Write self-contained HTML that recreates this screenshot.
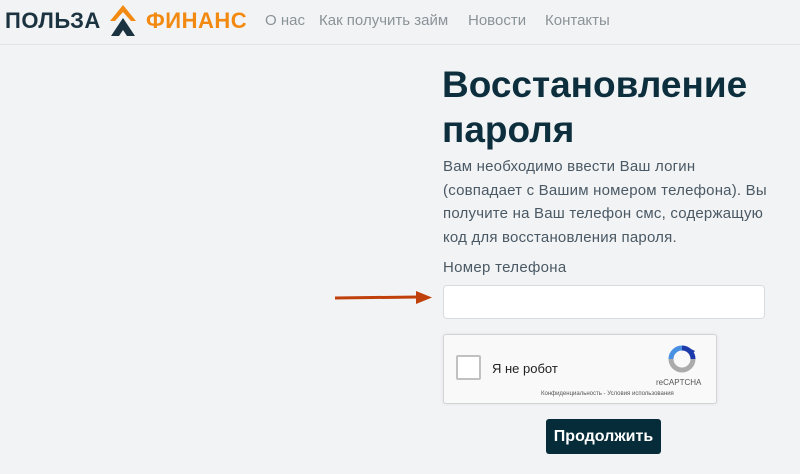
<!DOCTYPE html>
<html><head><meta charset="utf-8"><style>
*{margin:0;padding:0;box-sizing:border-box}
body{width:800px;height:474px;background:#f2f3f5;font-family:"Liberation Sans","Noto Sans CJK SC",sans-serif;position:relative;overflow:hidden}
.hdr{position:absolute;left:0;top:0;width:800px;height:45px;border-bottom:1px solid #e2e4e7}
.logo1{position:absolute;left:5px;top:8px;font-size:22px;font-weight:bold;color:#1b3340;letter-spacing:0.5px}
.logo2{position:absolute;left:146px;top:8px;font-size:22px;font-weight:bold;color:#f28a12;letter-spacing:0.5px}
.nav{position:absolute;top:12px;font-size:15px;color:#8a9398}
h1{position:absolute;left:442px;top:62px;font-size:37px;line-height:45px;color:#0d2f3d;font-weight:bold}
.p{position:absolute;left:443px;top:155px;font-size:15px;line-height:23.7px;color:#4a5964;letter-spacing:0.2px;white-space:nowrap}
.lbl{position:absolute;left:443px;top:259px;font-size:15px;color:#4a5964;letter-spacing:0.3px}
.inp{position:absolute;left:443px;top:285px;width:322px;height:34px;background:#fff;border:1px solid #d8dce0;border-radius:4px}
.cap{position:absolute;left:443px;top:334px;width:274px;height:70px;background:#f9f9f9;border:1px solid #d3d3d3;border-radius:3px;box-shadow:0 0 3px rgba(0,0,0,.08)}
.cb{position:absolute;left:12px;top:20px;width:25px;height:25px;background:#fff;border:2px solid #c1c1c1;border-radius:2px}
.btn{position:absolute;left:546px;top:419px;width:115px;height:35px;background:#062b39;border-radius:3px;color:#fff;font-size:16px;font-weight:bold;text-align:center;line-height:35px}
</style></head><body>
<div class="hdr">
<div class="logo1">ПОЛЬЗА</div>
<svg style="position:absolute;left:110px;top:5px" width="26" height="32" viewBox="0 0 26 32"><polygon points="13,0 26,16 21,16 13,7 5,16 0,16" fill="#f28a12"/><polygon points="13,13 25,31 17,31 13,25 9,31 1,31" fill="#1b3340"/></svg>
<div class="logo2">ФИНАНС</div>
<div class="nav" style="left:265px">О нас</div>
<div class="nav" style="left:319px">Как получить займ</div>
<div class="nav" style="left:468px">Новости</div>
<div class="nav" style="left:545px">Контакты</div>
</div>
<h1>Восстановление<br>пароля</h1>
<div class="p">Вам необходимо ввести Ваш логин<br>(совпадает с Вашим номером телефона). Вы<br>получите на Ваш телефон смс, содержащую<br>код для восстановления пароля.</div>
<div class="lbl">Номер телефона</div>
<svg style="position:absolute;left:334px;top:290px" width="100" height="16"><path d="M1 8 L84 7" stroke="#c0400c" stroke-width="3" fill="none"/><polygon points="82,1 98,7.5 82,14" fill="#c0400c"/></svg>
<div class="inp"></div>
<div class="cap">
<div class="cb"></div>
<div style="position:absolute;left:48px;top:26px;font-size:13px;color:#222">Я не робот</div>
<svg style="position:absolute;left:224px;top:10px" width="28" height="28" viewBox="0 0 28 28"><path d="M14 3 A11 11 0 0 1 25 14" stroke="#1c3aa9" stroke-width="5" fill="none"/><polygon points="19,2 27,6 22,11" fill="#1c3aa9"/><path d="M25 14 A11 11 0 0 1 14 25" stroke="#ababab" stroke-width="5" fill="none"/><path d="M14 25 A11 11 0 0 1 3 14" stroke="#ababab" stroke-width="5" fill="none"/><path d="M3 14 A11 11 0 0 1 14 3" stroke="#4a90e2" stroke-width="5" fill="none"/></svg>
<div style="position:absolute;left:212px;top:43px;font-size:8px;color:#555">reCAPTCHA</div>
<div style="position:absolute;left:97px;top:56px;font-size:6px;color:#555;white-space:nowrap">Конфиденциальность - Условия использования</div>
</div>
<div class="btn">Продолжить</div>
</body></html>
